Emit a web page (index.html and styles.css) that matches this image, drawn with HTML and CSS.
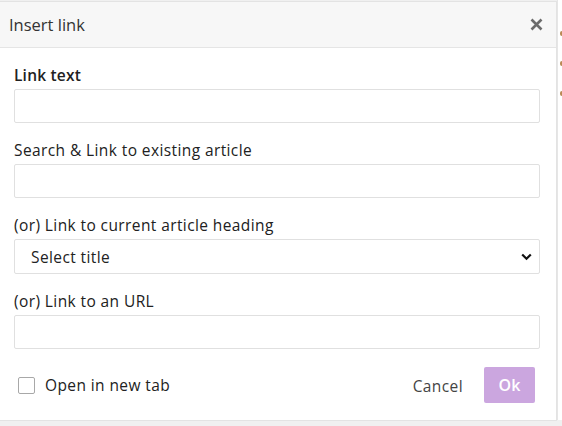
FILE: index.html
```html
<!DOCTYPE html>
<html>
<head>
<meta charset="utf-8">
<link rel="stylesheet" href="styles.css">
</head>
<body>
<div class="page">
  <div class="dots"><span></span><span></span><span></span></div>
  <div class="dialog">
    <div class="header">
      <span class="title">Insert link</span>
      <svg class="close" width="13" height="13" viewBox="0 0 13 13"><path d="M1.5 1.5 L11.5 11.5 M11.5 1.5 L1.5 11.5" stroke="#6b6b6b" stroke-width="2.6" stroke-linecap="butt"/></svg>
    </div>
    <div class="body">
      <div class="field">
        <label class="label strong">Link text</label>
        <div class="input"></div>
      </div>
      <div class="field">
        <label class="label">Search &amp; Link to existing article</label>
        <div class="input"></div>
      </div>
      <div class="field">
        <label class="label">(or) Link to current article heading</label>
        <div class="input select">
          <span>Select title</span>
          <svg width="11" height="8" viewBox="0 0 11 8"><path d="M1.2 1.5 L5.5 5.8 L9.8 1.5" fill="none" stroke="#111" stroke-width="2.2"/></svg>
        </div>
      </div>
      <div class="field last">
        <label class="label">(or) Link to an URL</label>
        <div class="input"></div>
      </div>
      <div class="footer">
        <div class="check"><span class="box"></span><span>Open in new tab</span></div>
        <div class="actions">
          <span class="cancel">Cancel</span>
          <span class="ok">Ok</span>
        </div>
      </div>
    </div>
  </div>
</div>
</body>
</html>
```
FILE: styles.css
```css
html, body {
  margin: 0;
  padding: 0;
}
body {
  width: 562px;
  height: 426px;
  background: #f0f0f0;
  overflow: hidden;
  font-family: "Open Sans", "Noto Sans", sans-serif;
}
.page {
  position: relative;
  width: 562px;
  height: 426px;
}
.dots {
  position: absolute;
  left: 557px;
  top: 0;
  width: 5px;
  height: 420px;
  background: #fff;
  border-left: 1px solid #e6e6e6;
}
.dots span {
  position: absolute;
  left: 2px;
  width: 4px;
  height: 5px;
  border-radius: 2px;
  background: #b98a55;
}
.dots span:nth-child(1) { top: 31px; }
.dots span:nth-child(2) { top: 61px; }
.dots span:nth-child(3) { top: 91px; }
.dialog {
  position: absolute;
  left: 0;
  top: 1px;
  width: 556px;
  height: 418px;
  background: #fff;
  border: 1px solid #e3e3e3;
  border-left: none;
  box-sizing: content-box;
}
.header {
  height: 45px;
  background: #f7f7f7;
  border-bottom: 1px solid #e5e5e5;
  display: flex;
  align-items: center;
  justify-content: space-between;
  padding: 0 13px 0 9px;
}
.title {
  font-size: 16.5px;
  color: #333;
  margin-top: -1px;
}
.close {
  display: block;
}
.body {
  padding: 17px 16px 0 14px;
}
.field {
  margin-bottom: 17px;
}
.field.last {
  margin-bottom: 18px;
}
.label {
  display: block;
  font-size: 15.5px;
  letter-spacing: 0.4px;
  color: #212121;
  line-height: 20px;
  margin-bottom: 4px;
}
.label.strong {
  font-weight: 600;
  letter-spacing: 0.2px;
}
.input {
  height: 32px;
  border: 1px solid #e0e0e0;
  border-radius: 2px;
  background: #fff;
}
.select {
  height: 33px;
  display: flex;
  align-items: center;
  justify-content: space-between;
  padding: 0 7px 0 16px;
  font-size: 15.5px;
  letter-spacing: 0.4px;
  color: #222;
}
.footer {
  display: flex;
  justify-content: space-between;
  align-items: center;
  margin-top: 1px;
}
.check {
  display: flex;
  align-items: center;
  gap: 10px;
  padding-left: 4px;
  font-size: 15.5px;
  letter-spacing: 0.4px;
  color: #222;
}
.box {
  width: 15px;
  height: 15px;
  border: 1px solid #a8a8a8;
  border-radius: 2px;
  background: #fff;
}
.actions {
  display: flex;
  align-items: center;
  gap: 21px;
  padding-right: 5px;
}
.cancel {
  font-size: 15.5px;
  letter-spacing: 0.4px;
  color: #444;
  margin-top: 1px;
}
.ok {
  width: 51px;
  height: 36px;
  display: flex;
  align-items: center;
  justify-content: center;
  background: #cba6df;
  color: #fff;
  border-radius: 2px;
  font-size: 16px;
  font-weight: 600;
}
```
